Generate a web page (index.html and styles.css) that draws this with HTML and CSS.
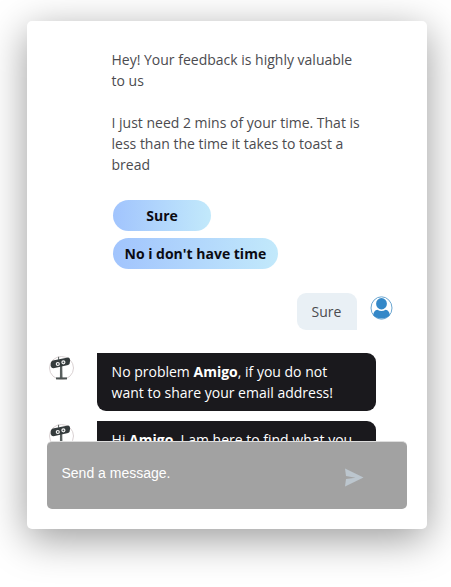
FILE: index.html
```html
<!DOCTYPE html>
<html lang="en">
<head>
<meta charset="utf-8">
<title>Feedback chat</title>
<link rel="stylesheet" href="styles.css">
</head>
<body>
<svg class="defs" aria-hidden="true">
  <symbol id="bot" viewBox="0 0 26 24">
    <ellipse cx="13.500" cy="12" rx="12" ry="11.500" fill="#fff" stroke="#cfc5c7" stroke-width=".8"/>
    <path d="M12 8h2.200l.3 14h-2.600z" fill="#59605f"/>
    <path d="M8 21.400h11v2H8z" fill="#4c5352"/>
    <path d="M10.600 .8v3" stroke="#59605f" stroke-width="1"/>
    <path d="M4.800 4.500 20 1.400q2 0 2.100 3 0 3.700-2 4.700L5.500 12.200q-2.600 0-2.800-3-.2-3.800 2.100-4.700z" fill="#343b3c"/>
    <circle cx="9.800" cy="8" r="1.500" fill="#4a5152" stroke="#f4f4f4" stroke-width="1.200"/>
    <circle cx="15.400" cy="6.300" r="1.500" fill="#4a5152" stroke="#f4f4f4" stroke-width="1.200"/>
  </symbol>
</svg>
<main class="chat">
  <section class="messages">
    <div class="intro">
      <p>Hey! Your feedback is highly valuable to us</p>
      <p>I just need 2 mins of your time. That is less than the time it takes to toast a bread</p>
    </div>
    <div class="options">
      <button class="option">Sure</button>
      <button class="option">No i don't have time</button>
    </div>
    <div class="reply">
      <div class="bubble bubble-user">Sure</div>
      <svg class="user-icon" viewBox="0 0 23 24">
        <ellipse cx="11.500" cy="12" rx="10.500" ry="11.200" fill="#fff" stroke="#6ba6d1" stroke-width="1"/>
        <ellipse cx="11.500" cy="7.700" rx="5.400" ry="5.700" fill="#3488c8"/>
        <path d="M3.200 19.200q.4-4.700 4.200-5.400 2 1.300 4.100 1.300t4.100-1.300q3.800.7 4.200 5.400-3.300 3.200-8.300 3.200t-8.300-3.200z" fill="#3488c8"/>
      </svg>
    </div>
    <div class="bot-row">
      <svg class="bot-icon"><use href="#bot"/></svg>
      <div class="bubble bubble-bot">No problem <b>Amigo</b>, if you do not want to share your email address!</div>
    </div>
    <div class="bot-row">
      <svg class="bot-icon"><use href="#bot"/></svg>
      <div class="bubble bubble-bot">Hi <b>Amigo</b>, I am here to find what you</div>
    </div>
  </section>
  <footer class="composer">
    <span class="placeholder">Send a message.</span>
    <svg class="send" viewBox="0 0 20 19"><path d="M1 .5 19.500 9.400 1 18.500l1-7.500 9.500-1.300L2 8z" fill="#bcc6ce"/></svg>
  </footer>
</main>
</body>
</html>
```
FILE: styles.css
```css
* { box-sizing: border-box; }
body {
  margin: 0;
  height: 587px;
  padding: 21px 24px 0 27px;
  overflow: hidden;
  background: #fff;
  font: 14px/21px "Open Sans", sans-serif;
  color: #4b4b4f;
}
.defs { display: none; }
.chat {
  width: 400px;
  height: 508px;
  padding: 0 20px 20px;
  display: flex;
  flex-direction: column;
  background: #fff;
  border-radius: 5px;
  box-shadow: 0 10px 40px rgba(0, 0, 0, .4);
}
.messages {
  height: 420px;
  padding-top: 28px;
  overflow: hidden;
  flex: none;
}
.intro { width: 250px; margin-left: 64.500px; }
.intro p { margin: 0 0 21px; }
.options {
  margin: 25px 0 0 66px;
  display: flex;
  flex-direction: column;
  align-items: flex-start;
  gap: 7px;
}
.option {
  min-width: 98px;
  height: 31px;
  padding: 0 11.500px;
  border: 0;
  border-radius: 16px;
  background: linear-gradient(90deg, #a1c4fd, #c2e9fb);
  color: #0b0b12;
  font: 700 14px/31px "Open Sans", sans-serif;
}
.reply {
  margin: 24px 14px 0 0;
  display: flex;
  justify-content: flex-end;
  gap: 13px;
}
.bubble { border-radius: 9px; padding: 8px 14.600px; }
.bubble-user {
  width: 60px;
  height: 37px;
  background: #e9f0f5;
  border-bottom-right-radius: 0;
}
.user-icon { width: 23px; height: 24px; margin-top: 3px; }
.bot-row { display: flex; gap: 22px; margin-bottom: 10px; padding-left: 1px; }
.reply + .bot-row { margin-top: 23px; }
.bot-icon { width: 26px; height: 24px; margin: 3px 1px 0 0; }
.bubble-bot {
  width: 279px;
  height: 58px;
  background: #1a191d;
  color: #fff;
  border-top-left-radius: 0;
}
.composer {
  height: 68px;
  flex: none;
  display: flex;
  justify-content: space-between;
  padding: 21px 43px 0 14.500px;
  border-top: 1px solid #dedede;
  border-radius: 5px;
  background: #a2a2a2;
  color: #fff;
  font-family: "Liberation Sans", sans-serif;
}
.send { width: 20px; height: 19px; margin-top: 5px; }
```
